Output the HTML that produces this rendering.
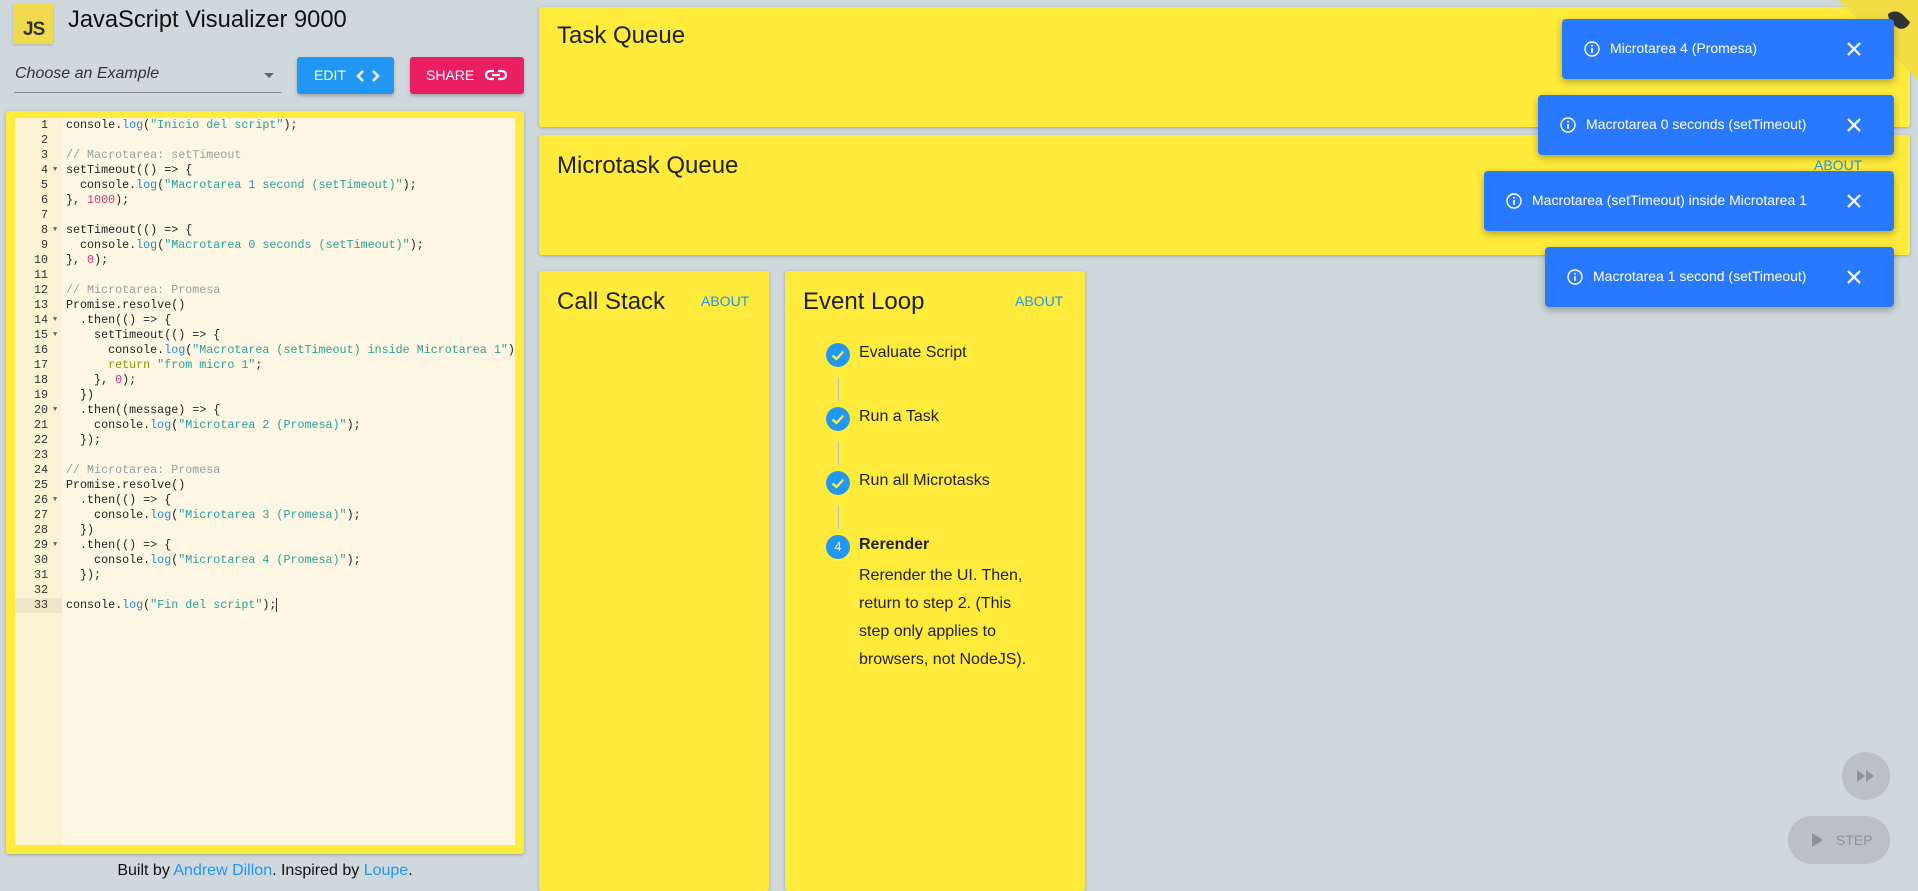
<!DOCTYPE html>
<html><head><meta charset="utf-8">
<style>
*{box-sizing:border-box;margin:0;padding:0}
body{width:1918px;height:884px;background:#cfd8dc;font-family:"Liberation Sans",Arial,sans-serif;position:relative;overflow:hidden;color:#212121}
.abs{position:absolute}
.card{position:absolute;background:#ffeb3b;border-radius:3px;box-shadow:0 1px 3px rgba(0,0,0,.25)}
.ct{position:absolute;font-size:24px;color:#212121}
.about{position:absolute;font-size:14px;color:#2196f3}
.code{position:absolute;left:15px;top:118px;width:500px;height:727px;background:#fdf6e3;font-family:"Liberation Mono",monospace;font-size:11.7px}
.gut{position:absolute;left:0;top:0;width:47px;height:100%;background:#fbf1d3}
.ln{position:absolute;left:0;width:47px;height:15px;line-height:15px;text-align:right;padding-right:14px;color:#333}
.fold{position:absolute;left:38px;font-size:7px;color:#666}
.cl{position:absolute;left:51px;height:15px;line-height:15px;white-space:pre;color:#222}
.k{color:#268bd2}.s{color:#2aa198}.n{color:#d33682}.c{color:#93a1a1}.r{color:#859900}
.toast{position:absolute;height:60px;background:#2979ff;border-radius:4px;box-shadow:0 3px 8px rgba(0,0,0,.3);color:#fff;font-size:14px}
.toast .ic{position:absolute;top:22px;width:16px;height:16px}
.toast .tx{position:absolute;top:21px}
.toast .x{position:absolute;right:30px;top:20px;width:20px;height:20px}
.step{position:absolute;left:826px;width:24px;height:24px;border-radius:50%;background:#2196f3;color:#fff;font-size:13px;text-align:center;line-height:24px}
.stxt{position:absolute;left:859px;font-size:16px;color:#212121}
.vl{position:absolute;left:838px;width:1px;background:#bdbdbd}
</style></head><body>

<div class="abs" style="left:13px;top:4px;width:40px;height:40px;background:#f0db4f;box-shadow:0 1px 2px rgba(0,0,0,.2)"><span style="position:absolute;left:10px;top:15px;font-weight:bold;font-size:19px;color:#323330;letter-spacing:-1px">JS</span></div>
<div class="abs" style="left:68px;top:7px;font-size:23.7px;color:#111">JavaScript Visualizer 9000</div>

<div class="abs" style="left:15px;top:65px;font-size:16px;font-style:italic;color:#333">Choose an Example</div>
<div class="abs" style="left:264px;top:73px;width:0;height:0;border-left:5px solid transparent;border-right:5px solid transparent;border-top:5px solid #666"></div>
<div class="abs" style="left:14px;top:92px;width:267px;height:1px;background:#888"></div>

<div class="abs" style="left:297px;top:57px;width:97px;height:37px;background:#2196f3;border-radius:3px;box-shadow:0 2px 3px rgba(0,0,0,.25);color:#fff;font-size:14px">
<span style="position:absolute;left:17px;top:10px">EDIT</span>
<svg style="position:absolute;left:59px;top:12px" width="24" height="14" viewBox="0 0 24 14"><path d="M7 2 L2 7 L7 12 M17 2 L22 7 L17 12" stroke="#fff" stroke-width="2.4" fill="none"/></svg></div>
<div class="abs" style="left:410px;top:57px;width:114px;height:37px;background:#e91e63;border-radius:3px;box-shadow:0 2px 3px rgba(0,0,0,.25);color:#fff;font-size:14px">
<span style="position:absolute;left:16px;top:10px">SHARE</span>
<svg style="position:absolute;left:75px;top:11px" width="22" height="14" viewBox="0 0 22 14"><path d="M9 3 H5 A4 4 0 0 0 5 11 H9 M13 3 H17 A4 4 0 0 1 17 11 H13 M7 7 H15" stroke="#fff" stroke-width="2.2" fill="none"/></svg></div>

<div class="card" style="left:6px;top:111px;width:518px;height:743px"></div>
<div class="code">
<div class="gut"></div>
<div class="abs" style="left:0;top:480px;width:47px;height:15px;background:#ede5c7"></div>
<div class="ln" style="top:0">1</div><div class="ln" style="top:15px">2</div><div class="ln" style="top:30px">3</div><div class="ln" style="top:45px">4</div><div class="ln" style="top:60px">5</div><div class="ln" style="top:75px">6</div><div class="ln" style="top:90px">7</div><div class="ln" style="top:105px">8</div><div class="ln" style="top:120px">9</div><div class="ln" style="top:135px">10</div><div class="ln" style="top:150px">11</div><div class="ln" style="top:165px">12</div><div class="ln" style="top:180px">13</div><div class="ln" style="top:195px">14</div><div class="ln" style="top:210px">15</div><div class="ln" style="top:225px">16</div><div class="ln" style="top:240px">17</div><div class="ln" style="top:255px">18</div><div class="ln" style="top:270px">19</div><div class="ln" style="top:285px">20</div><div class="ln" style="top:300px">21</div><div class="ln" style="top:315px">22</div><div class="ln" style="top:330px">23</div><div class="ln" style="top:345px">24</div><div class="ln" style="top:360px">25</div><div class="ln" style="top:375px">26</div><div class="ln" style="top:390px">27</div><div class="ln" style="top:405px">28</div><div class="ln" style="top:420px">29</div><div class="ln" style="top:435px">30</div><div class="ln" style="top:450px">31</div><div class="ln" style="top:465px">32</div><div class="ln" style="top:480px">33</div>
<div class="fold" style="top:48px">▼</div><div class="fold" style="top:108px">▼</div><div class="fold" style="top:198px">▼</div><div class="fold" style="top:213px">▼</div><div class="fold" style="top:288px">▼</div><div class="fold" style="top:378px">▼</div><div class="fold" style="top:423px">▼</div>
<div class="cl" style="top:0">console.<span class="k">log</span>(<span class="s">"Inicio del script"</span>);</div>
<div class="cl c" style="top:30px">// Macrotarea: setTimeout</div>
<div class="cl" style="top:45px">setTimeout(() =&gt; {</div>
<div class="cl" style="top:60px">  console.<span class="k">log</span>(<span class="s">"Macrotarea 1 second (setTimeout)"</span>);</div>
<div class="cl" style="top:75px">}, <span class="n">1000</span>);</div>
<div class="cl" style="top:105px">setTimeout(() =&gt; {</div>
<div class="cl" style="top:120px">  console.<span class="k">log</span>(<span class="s">"Macrotarea 0 seconds (setTimeout)"</span>);</div>
<div class="cl" style="top:135px">}, <span class="n">0</span>);</div>
<div class="cl c" style="top:165px">// Microtarea: Promesa</div>
<div class="cl" style="top:180px">Promise.resolve()</div>
<div class="cl" style="top:195px">  .then(() =&gt; {</div>
<div class="cl" style="top:210px">    setTimeout(() =&gt; {</div>
<div class="cl" style="top:225px">      console.<span class="k">log</span>(<span class="s">"Macrotarea (setTimeout) inside Microtarea 1"</span>)</div>
<div class="cl" style="top:240px">      <span class="r">return</span> <span class="s">"from micro 1"</span>;</div>
<div class="cl" style="top:255px">    }, <span class="n">0</span>);</div>
<div class="cl" style="top:270px">  })</div>
<div class="cl" style="top:285px">  .then((message) =&gt; {</div>
<div class="cl" style="top:300px">    console.<span class="k">log</span>(<span class="s">"Microtarea 2 (Promesa)"</span>);</div>
<div class="cl" style="top:315px">  });</div>
<div class="cl c" style="top:345px">// Microtarea: Promesa</div>
<div class="cl" style="top:360px">Promise.resolve()</div>
<div class="cl" style="top:375px">  .then(() =&gt; {</div>
<div class="cl" style="top:390px">    console.<span class="k">log</span>(<span class="s">"Microtarea 3 (Promesa)"</span>);</div>
<div class="cl" style="top:405px">  })</div>
<div class="cl" style="top:420px">  .then(() =&gt; {</div>
<div class="cl" style="top:435px">    console.<span class="k">log</span>(<span class="s">"Microtarea 4 (Promesa)"</span>);</div>
<div class="cl" style="top:450px">  });</div>
<div class="cl" style="top:480px">console.<span class="k">log</span>(<span class="s">"Fin del script"</span>);<span style="border-left:1px solid #333"></span></div>
</div>
<div class="abs" style="left:0;width:530px;top:862px;text-align:center;font-size:16px;color:#111">Built by <span style="color:#2196f3">Andrew Dillon</span>. Inspired by <span style="color:#2196f3">Loupe</span>.</div>

<div class="card" style="left:539px;top:7px;width:1371px;height:120px"><div class="ct" style="left:18px;top:15px">Task Queue</div></div>
<div class="card" style="left:539px;top:135px;width:1371px;height:120px"><div class="ct" style="left:18px;top:17px">Microtask Queue</div><div class="about" style="left:1275px;top:22px">ABOUT</div></div>
<div class="card" style="left:539px;top:271px;width:230px;height:620px"><div class="ct" style="left:18px;top:17px">Call Stack</div><div class="about" style="left:162px;top:22px">ABOUT</div></div>
<div class="card" style="left:785px;top:271px;width:300px;height:620px"><div class="ct" style="left:18px;top:17px">Event Loop</div><div class="about" style="left:230px;top:22px">ABOUT</div></div>

<svg class="step" style="top:343px;background:none" width="24" height="24" viewBox="0 0 24 24"><circle cx="12" cy="12" r="12" fill="#2196f3"/><path d="M6.5 12.5 L10.5 16 L17.5 8.5" stroke="#ffeb3b" stroke-width="2.2" fill="none"/></svg>
<div class="stxt" style="top:344px">Evaluate Script</div>
<div class="vl" style="top:377px;height:24px"></div>
<svg class="step" style="top:407px;background:none" width="24" height="24" viewBox="0 0 24 24"><circle cx="12" cy="12" r="12" fill="#2196f3"/><path d="M6.5 12.5 L10.5 16 L17.5 8.5" stroke="#ffeb3b" stroke-width="2.2" fill="none"/></svg>
<div class="stxt" style="top:408px">Run a Task</div>
<div class="vl" style="top:441px;height:24px"></div>
<svg class="step" style="top:471px;background:none" width="24" height="24" viewBox="0 0 24 24"><circle cx="12" cy="12" r="12" fill="#2196f3"/><path d="M6.5 12.5 L10.5 16 L17.5 8.5" stroke="#ffeb3b" stroke-width="2.2" fill="none"/></svg>
<div class="stxt" style="top:472px">Run all Microtasks</div>
<div class="vl" style="top:505px;height:24px"></div>
<div class="step" style="top:535px">4</div>
<div class="stxt" style="top:536px;font-weight:bold">Rerender</div>
<div class="stxt" style="top:562px;line-height:28px;width:178px">Rerender the UI. Then, return to step 2. (This step only applies to browsers, not NodeJS).</div>

<svg class="abs" style="left:1838px;top:0" width="80" height="80" viewBox="0 0 80 80"><path d="M0 0 H80 V80 Z" fill="#f2dd45"/><path d="M50 14 C55 10 62 11 66 16 L72 22 C70 28 64 30 60 28 C55 25 50 20 50 14Z" fill="#333"/></svg>

<div class="toast" style="left:1562px;top:19px;width:332px"><svg class="ic" style="left:22px" viewBox="0 0 16 16"><circle cx="8" cy="8" r="7" stroke="#fff" stroke-width="1.4" fill="none"/><path d="M8 7 V12" stroke="#fff" stroke-width="1.6"/><circle cx="8" cy="4.7" r="1" fill="#fff"/></svg><div class="tx" style="left:48px">Microtarea 4 (Promesa)</div><svg class="x" viewBox="0 0 20 20"><path d="M4 4 L16 16 M16 4 L4 16" stroke="#fff" stroke-width="2.2"/></svg></div>
<div class="toast" style="left:1538px;top:95px;width:356px"><svg class="ic" style="left:22px" viewBox="0 0 16 16"><circle cx="8" cy="8" r="7" stroke="#fff" stroke-width="1.4" fill="none"/><path d="M8 7 V12" stroke="#fff" stroke-width="1.6"/><circle cx="8" cy="4.7" r="1" fill="#fff"/></svg><div class="tx" style="left:48px">Macrotarea 0 seconds (setTimeout)</div><svg class="x" viewBox="0 0 20 20"><path d="M4 4 L16 16 M16 4 L4 16" stroke="#fff" stroke-width="2.2"/></svg></div>
<div class="toast" style="left:1484px;top:171px;width:410px"><svg class="ic" style="left:22px" viewBox="0 0 16 16"><circle cx="8" cy="8" r="7" stroke="#fff" stroke-width="1.4" fill="none"/><path d="M8 7 V12" stroke="#fff" stroke-width="1.6"/><circle cx="8" cy="4.7" r="1" fill="#fff"/></svg><div class="tx" style="left:48px">Macrotarea (setTimeout) inside Microtarea 1</div><svg class="x" viewBox="0 0 20 20"><path d="M4 4 L16 16 M16 4 L4 16" stroke="#fff" stroke-width="2.2"/></svg></div>
<div class="toast" style="left:1545px;top:247px;width:349px"><svg class="ic" style="left:22px" viewBox="0 0 16 16"><circle cx="8" cy="8" r="7" stroke="#fff" stroke-width="1.4" fill="none"/><path d="M8 7 V12" stroke="#fff" stroke-width="1.6"/><circle cx="8" cy="4.7" r="1" fill="#fff"/></svg><div class="tx" style="left:48px">Macrotarea 1 second (setTimeout)</div><svg class="x" viewBox="0 0 20 20"><path d="M4 4 L16 16 M16 4 L4 16" stroke="#fff" stroke-width="2.2"/></svg></div>

<div class="abs" style="left:1842px;top:752px;width:48px;height:48px;border-radius:50%;background:#b9c1c4"><svg style="position:absolute;left:15px;top:18px" width="18" height="12" viewBox="0 0 18 12"><path d="M0 0 L8 6 L0 12Z M9 0 L17 6 L9 12Z" fill="#8a9397"/></svg></div>
<div class="abs" style="left:1788px;top:816px;width:102px;height:48px;border-radius:24px;background:#b9c1c4"><svg style="position:absolute;left:24px;top:17px" width="11" height="14" viewBox="0 0 11 14"><path d="M0 0 L11 7 L0 14Z" fill="#8a9397"/></svg><span style="position:absolute;left:48px;top:16px;font-size:14px;color:#8a9397">STEP</span></div>
</body></html>
